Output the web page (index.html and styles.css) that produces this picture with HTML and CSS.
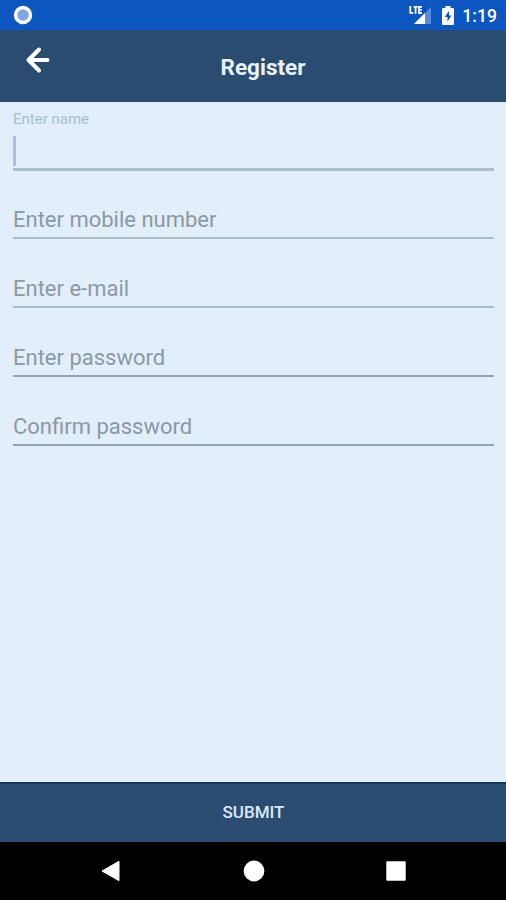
FILE: index.html
```
<!DOCTYPE html>
<html lang="en">
<head>
    <meta charset="UTF-8">
    <meta name="viewport" content="width=device-width, initial-scale=1.0">
    <title>Register</title>
    <link rel="stylesheet" href="styles.css">
</head>
<body>
    <div class="screen">
        <!-- Status bar -->
        <div class="status-bar">
            <svg class="status-sync" width="20" height="20" viewBox="0 0 20 20">
                <circle cx="10" cy="10" r="7.5" fill="#7fa5e2" stroke="#fff" stroke-width="3.4"/>
            </svg>
            <div class="status-icons">
                <svg class="signal" width="24" height="20" viewBox="0 0 24 20">
                    <path d="M22 2v17H5z" fill="#5c8bdb"/>
                    <path d="M16 8v11H5z" fill="#fff"/>
                    <path d="M1.3 1v6.9h3M4.6 1.8h4M6.6 1.8v7M13 1.8h-3v6.2h3M10 4.8h2.7" fill="none" stroke="#fff" stroke-width="1.8"/>
                </svg>
                <svg class="battery" width="12" height="19" viewBox="0 0 12 19">
                    <path d="M3.5 0h5v2H11q1 0 1 1v15q0 1-1 1H1q-1 0-1-1V3q0-1 1-1h2.5z" fill="#fff"/>
                    <path d="M7 4.8L2.8 11h2.7v4.8L9.4 9.5H7z" fill="#0c56bf"/>
                </svg>
                <span class="clock">1:19</span>
            </div>
        </div>

        <!-- Header -->
        <header class="header">
            <button class="back" type="button" aria-label="Back">
                <svg width="26" height="28" viewBox="0 0 26 28">
                    <path d="M14 3.5L3.5 14 14 24.5M4 14H22.5" fill="none" stroke="#fff" stroke-width="4" stroke-linecap="round" stroke-linejoin="round"/>
                </svg>
            </button>
            <h1>Register</h1>
        </header>

        <form class="form">
            <div class="field focused">
                <label for="name">Enter name</label>
                <div class="entry">
                    <span class="caret"></span>
                    <input type="text" id="name">
                </div>
            </div>
            <div class="field light">
                <input type="tel" placeholder="Enter mobile number">
            </div>
            <div class="field light">
                <input type="email" placeholder="Enter e-mail">
            </div>
            <div class="field">
                <input type="password" placeholder="Enter password">
            </div>
            <div class="field">
                <input type="password" placeholder="Confirm password">
            </div>
        </form>

        <button class="submit" type="button">SUBMIT</button>

        <!-- System navigation -->
        <nav class="nav-bar">
            <svg width="22" height="22" viewBox="0 0 22 22"><path d="M19 1.3v19.4L2 11z" fill="#fff" stroke="#fff" stroke-linejoin="round"/></svg>
            <svg width="22" height="22" viewBox="0 0 22 22"><circle cx="11" cy="11" r="10.4" fill="#fff"/></svg>
            <svg width="22" height="22" viewBox="0 0 22 22"><rect x="1.3" y="1.3" width="19.4" height="19.4" rx="1" fill="#fff"/></svg>
        </nav>
    </div>
</body>
</html>
```
FILE: styles.css
```
* {
    box-sizing: border-box;
}

body {
    margin: 0;
    font-family: Roboto, sans-serif;
    background-color: #e2eefa;
}

.screen {
    display: flex;
    flex-direction: column;
    height: 900px;
}

.status-bar {
    display: flex;
    justify-content: space-between;
    align-items: center;
    height: 30px;
    padding: 0 9px 0 13px;
    background-color: #0c56bf;
}

.status-icons {
    display: flex;
    align-items: center;
}

.signal {
    margin-right: 9px;
}

.battery {
    margin-right: 8px;
}

.clock {
    font-size: 17.6px;
    font-weight: 500;
    line-height: 30px;
    color: #fff;
    padding-top: 2px;
}

.header {
    display: grid;
    grid-template-columns: 60px 1fr 40px;
    height: 72px;
    background-color: #294c70;
}

.back {
    display: flex;
    align-items: flex-start;
    padding: 16px 0 0 25px;
    border: none;
    background: none;
}

.header h1 {
    margin: 0;
    font-size: 22.5px;
    font-weight: 700;
    line-height: 75px;
    text-align: center;
    color: #e8f3ff;
}

.form {
    flex: 1;
    padding: 0 12px 0 13px;
}

.field {
    height: 69px;
    padding-top: 29px;
    border-bottom: 2px solid #92a2b0;
}

.field.light {
    border-bottom-color: #adbdc9;
}

.field.focused {
    padding-top: 9px;
    border-bottom: 3px solid #a5bed2;
}

/* pull the first plain field up under the thicker focused line */
.field.focused + .field {
    height: 68px;
    padding-top: 28px;
}

.field label {
    display: block;
    font-size: 15px;
    line-height: 17px;
    color: #a0c2cb;
}

.entry {
    display: flex;
    align-items: center;
    height: 30px;
    margin-top: 8px;
}

.caret {
    width: 3px;
    height: 30px;
    background-color: #a9c2d7;
}

.field input {
    display: block;
    width: 100%;
    height: 40px;
    padding: 0;
    border: none;
    outline: none;
    background: none;
    font-family: inherit;
    font-size: 22px;
    color: #294c70;
}

.field .entry input {
    flex: 1;
    height: 30px;
}

.field input::placeholder {
    color: #8b99a5;
    opacity: 1;
}

.submit {
    height: 60px;
    padding: 0 0 2px 1px;
    border: none;
    border-top: 2px solid #133a66;
    background-color: #294c70;
    font-family: inherit;
    font-size: 17px;
    font-weight: 500;
    color: #dbe9f8;
}

.nav-bar {
    display: flex;
    justify-content: space-between;
    align-items: center;
    height: 58px;
    padding: 0 99px 0 100px;
    background-color: #000;
}
```
